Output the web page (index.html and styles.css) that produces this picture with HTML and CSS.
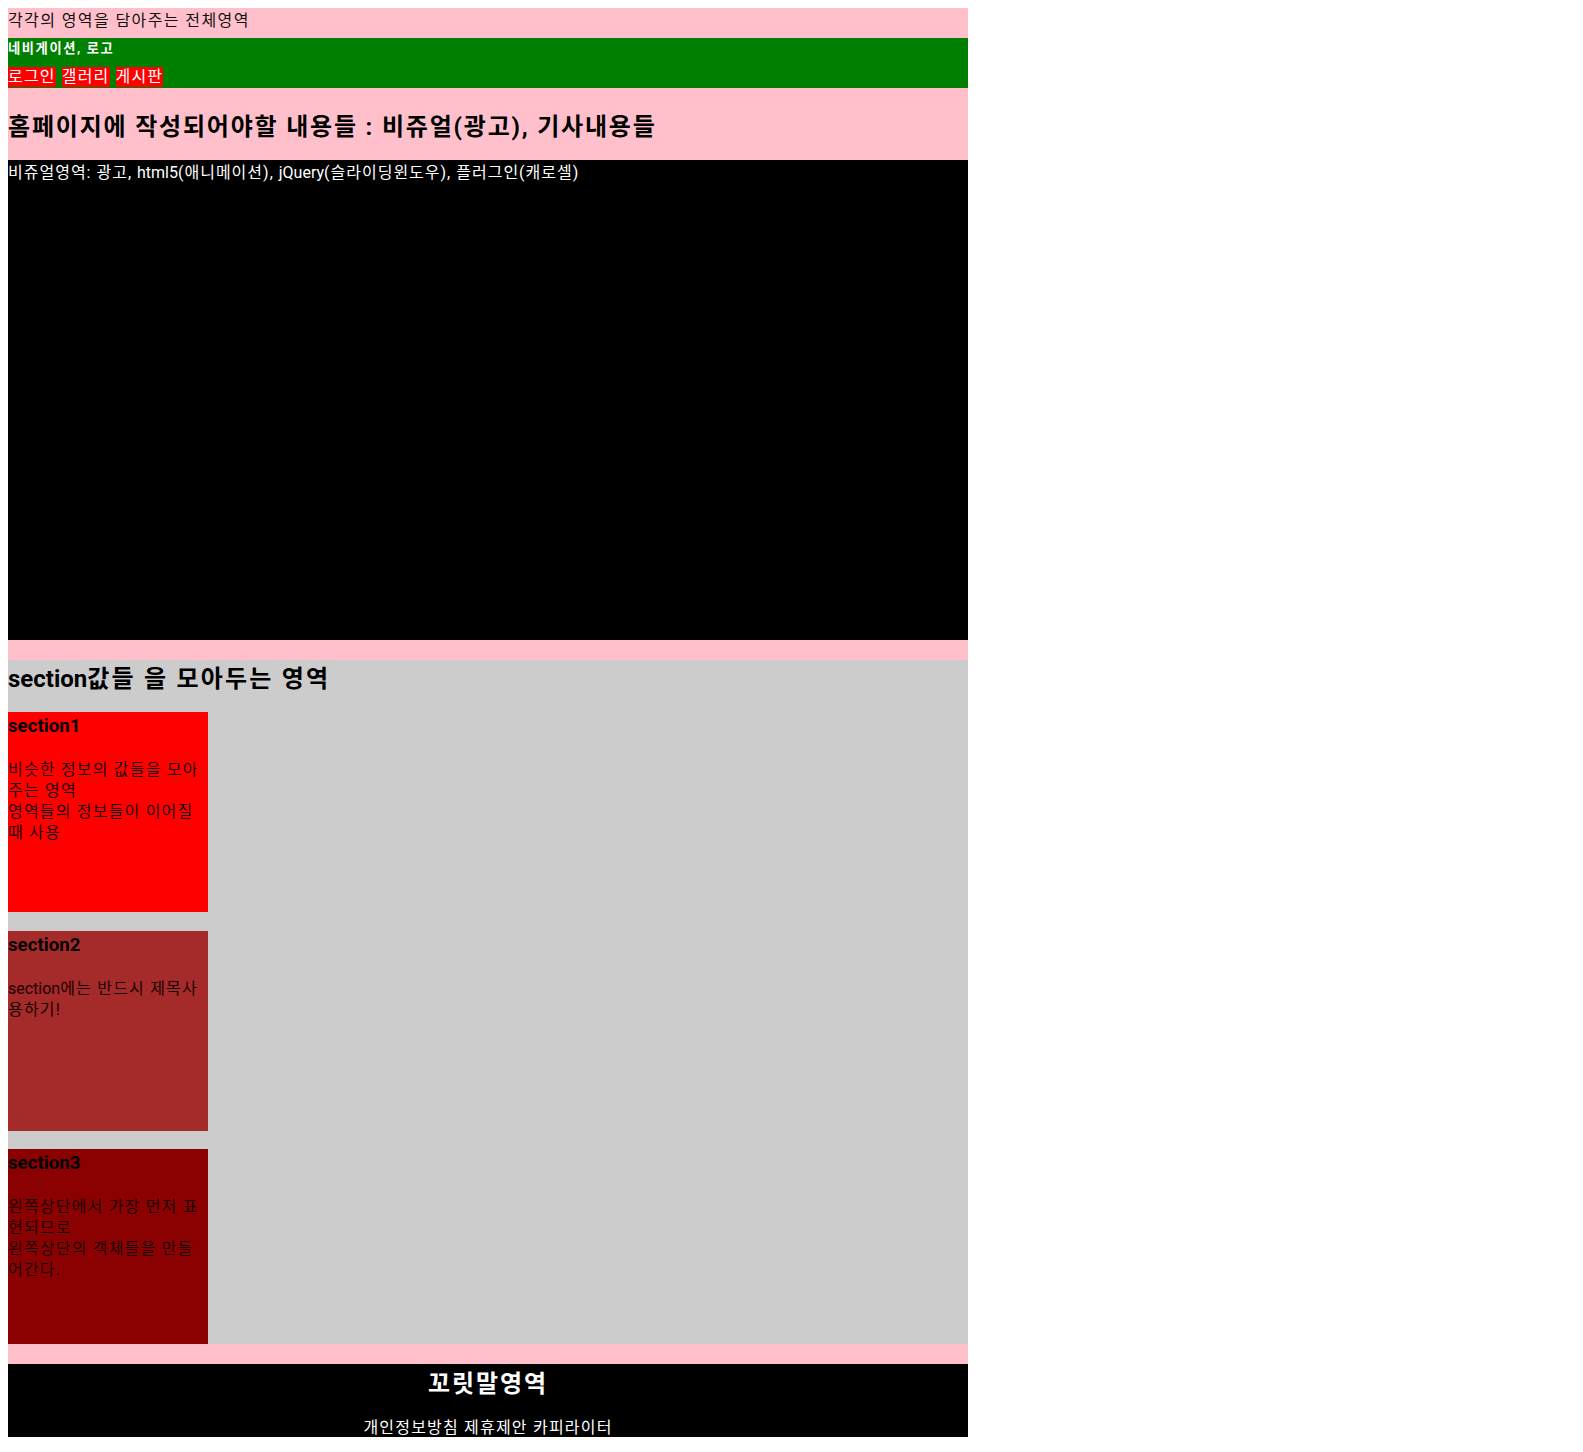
FILE: index.html
```html
<!DOCTYPE html>
<html lang="ko">
<head>
<meta charset="utf-8">
<title>시멘틱 레이아웃</title>
<link rel="stylesheet" href="styles.css">
</head>
<body>
<div class="wrap">
  <div class="wrap-title">각각의 영역을 담아주는 전체영역</div>
  <nav class="nav">
    <h5 class="nav-title">네비게이션, 로고</h5>
    <ul class="menu">
      <li class="menu-item">로그인</li>
      <li class="menu-item">갤러리</li>
      <li class="menu-item">게시판</li>
    </ul>
  </nav>
  <header class="intro">
    <h1 class="intro-title">홈페이지에 작성되어야할 내용들 : 비쥬얼(광고), 기사내용들</h1>
  </header>
  <div class="visual">비쥬얼영역: 광고, <span class="latin">html5</span>(애니메이션), <span class="latin">jQuery</span>(슬라이딩윈도우), 플러그인(캐로셀)</div>
  <article class="sections">
    <h2 class="sections-title"><span class="latin">section</span>값들 을 모아두는 영역</h2>
    <section class="box box-1">
      <h3 class="box-title">section1</h3>
      <p class="box-text">비슷한 정보의 값들을 모아주는 영역<br>영역들의 정보들이 이어질 때 사용</p>
    </section>
    <section class="box box-2">
      <h3 class="box-title">section2</h3>
      <p class="box-text"><span class="latin">section</span>에는 반드시 제목사용하기!</p>
    </section>
    <section class="box box-3">
      <h3 class="box-title">section3</h3>
      <p class="box-text">왼쪽상단에서 가장 먼저 표현되므로<br>왼쪽상단의 객체들을 만들어간다.</p>
    </section>
  </article>
  <footer class="footer">
    <h2 class="footer-title">꼬릿말영역</h2>
    <p class="footer-text">개인정보방침 제휴제안 카피라이터</p>
  </footer>
</div>
</body>
</html>
```

FILE: styles.css
```css
body {
  margin: 8px;
  font-family: Roboto, "Noto Sans CJK KR", sans-serif;
  font-size: 16px;
  letter-spacing: 1.2px;
  color: #000;
  background: #fff;
}

.latin {
  letter-spacing: 0;
}

.wrap {
  width: 960px;
  background: #ffc0cb;
}

.wrap-title {
  padding: 1px 0 5px;
  line-height: 24px;
  letter-spacing: 1.4px;
  color: #111;
}

.nav {
  background: #008000;
  height: 50px;
}

.nav-title {
  margin: 0 0 8px;
  font-size: 13.28px;
  font-weight: bold;
  line-height: 21px;
  letter-spacing: 1.6px;
  color: #fff;
}

.menu {
  margin: 0;
  padding: 0;
  list-style: none;
  display: flex;
  gap: 6px;
}

.menu-item {
  height: 20px;
  line-height: 20px;
  background: #ff0000;
  color: #fff;
}

.intro {
  height: 72px;
}

.intro-title {
  margin: 0;
  padding-top: 24px;
  font-size: 24px;
  font-weight: bold;
  line-height: 30px;
  letter-spacing: 1.8px;
}

.visual {
  height: 480px;
  background: #000;
  color: #fff;
  line-height: 26px;
  letter-spacing: 1px;
}

.sections {
  margin-top: 20px;
  height: 684px;
  overflow: hidden;
  background: #cccccc;
  display: flex;
  flex-direction: column;
  align-items: flex-start;
}

.sections-title {
  margin: 0 0 18px;
  padding-top: 4px;
  font-size: 24px;
  font-weight: bold;
  line-height: 30px;
  letter-spacing: 2.2px;
}

.box {
  flex: none;
  width: 200px;
  height: 200px;
  margin-bottom: 18.7px;
}

.box-1 { background: #ff0000; }
.box-2 { background: #a52a2a; }
.box-3 { background: #8b0000; }

.box-title {
  margin: 0 0 19px;
  font-size: 18.72px;
  font-weight: bold;
  line-height: 28px;
  letter-spacing: 0;
}

.box-text {
  margin: 0;
  line-height: 21px;
  color: #1a0000;
}

.footer {
  margin-top: 20px;
  height: 73px;
  background: #000;
  color: #fff;
  text-align: center;
}

.footer-title {
  margin: 0 0 20px;
  padding-top: 5px;
  font-size: 24px;
  font-weight: bold;
  line-height: 30px;
  letter-spacing: 1.9px;
}

.footer-text {
  margin: 0;
  line-height: 18px;
}
```
